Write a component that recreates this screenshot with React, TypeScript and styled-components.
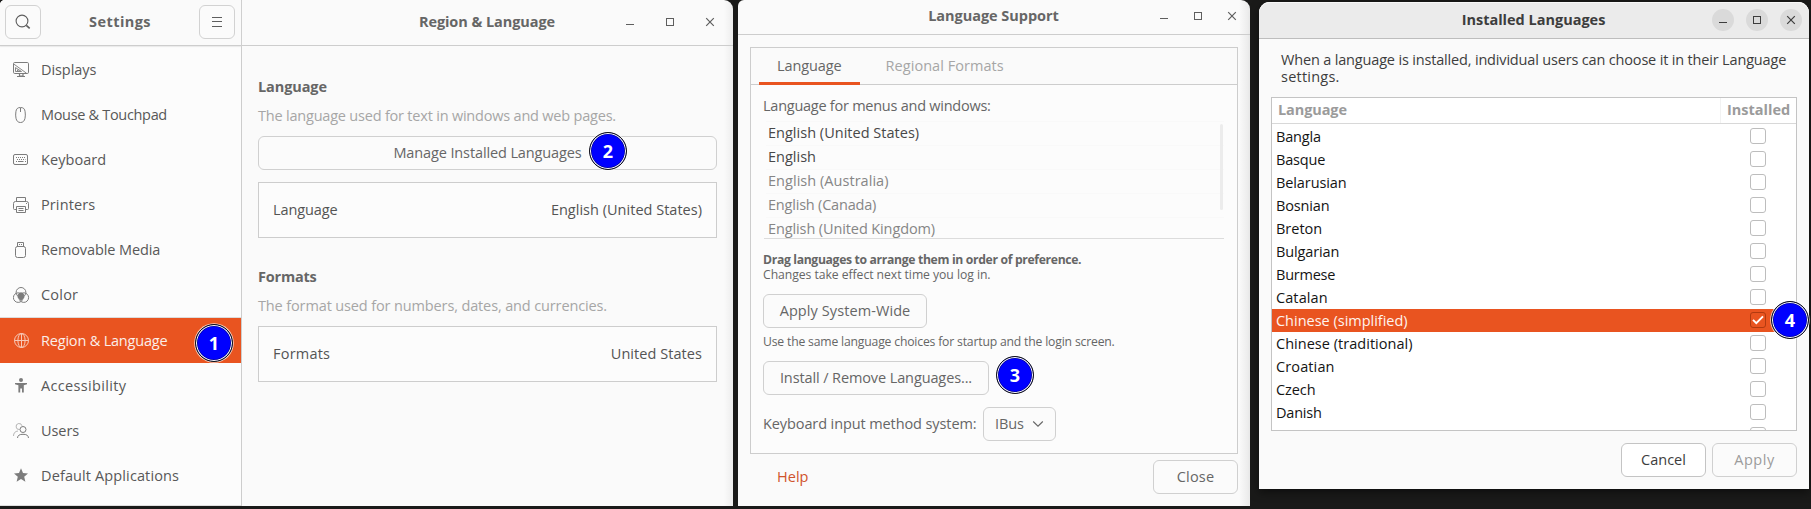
import React from 'react';
import styled, { createGlobalStyle, css } from 'styled-components';

const GlobalStyle = createGlobalStyle`
  * { box-sizing: border-box; }
  html, body { margin: 0; padding: 0; background: #1a1a19; }
  body { overflow: hidden; }
  button { font: inherit; padding: 0; }
`;

const accent = '#e95420';
const line = '#cdcdcd';

const Desktop = styled.main`
  display: flex;
  align-items: flex-start;
  width: 1811px;
  height: 509px;
  overflow: hidden;
  font-family: 'Open Sans', 'Noto Sans', sans-serif;
  font-size: 14.5px;
  line-height: 20px;
  color: #666;
  background: #1a1a19;
  white-space: nowrap;
`;

const Label = styled.span<{ $ls?: number }>`
  letter-spacing: ${p => p.$ls ?? 0}px;
`;

const Title = styled(Label)`
  font-weight: 700;
`;

/* ---------- shared window chrome ---------- */

const WinControls = styled.div<{ $gap: number }>`
  display: flex;
  align-items: center;
  gap: ${p => p.$gap}px;
`;

const ControlButton = styled.button<{ $round?: boolean }>`
  display: flex;
  align-items: center;
  justify-content: center;
  width: 22px;
  height: 22px;
  border: 0;
  border-radius: 50%;
  color: ${p => (p.$round ? '#3d3d3d' : '#5e5e5e')};
  background: ${p => (p.$round ? '#dadada' : 'transparent')};
`;

const PushButton = styled.button<{ $w?: number; $disabled?: boolean; $strong?: boolean }>`
  display: flex;
  align-items: center;
  justify-content: center;
  width: ${p => (p.$w ? `${p.$w}px` : '100%')};
  height: 34px;
  flex: none;
  border: 1px solid ${p => (p.$strong ? '#c4c4c4' : '#d0d0d0')};
  border-radius: 6px;
  background: ${p => (p.$strong ? '#fff' : '#fbfbfb')};
  color: ${p => (p.$disabled ? '#9c9c9c' : p.$strong ? '#3d3d3d' : '#666')};
`;

const Glyph = styled.svg`
  display: block;
  flex: none;
`;

function Controls({ gap, round }: { gap: number; round?: boolean }) {
  return (
    <WinControls $gap={gap}>
      <ControlButton $round={round} aria-label="Minimize">
        <Glyph width="10" height="10" viewBox="0 0 10 10"><path d="M1 7.5h8" stroke="currentColor" /></Glyph>
      </ControlButton>
      <ControlButton $round={round} aria-label="Maximize">
        <Glyph width="10" height="10" viewBox="0 0 10 10"><rect x="1.5" y="1.5" width="7" height="7" fill="none" stroke="currentColor" /></Glyph>
      </ControlButton>
      <ControlButton $round={round} aria-label="Close">
        <Glyph width="10" height="10" viewBox="0 0 10 10"><path d="M1.2 1.2l7.6 7.6M8.8 1.2L1.2 8.8" stroke="currentColor" strokeWidth="1.2" /></Glyph>
      </ControlButton>
    </WinControls>
  );
}

const Badge = styled.span<{ $x: number; $y: number }>`
  position: absolute;
  left: ${p => p.$x - 19}px;
  top: ${p => p.$y - 19}px;
  display: flex;
  align-items: center;
  justify-content: center;
  width: 38px;
  height: 38px;
  border: 1px solid #111;
  border-radius: 50%;
  background: #00f;
  box-shadow: 0 0 0 0.8px rgba(255, 255, 255, 0.75), inset 0 0 0 1px #fff, inset 0 0 0 1.6px #000090;
  color: #fff;
  font-size: 18px;
  font-weight: 700;
  z-index: 2;
`;

/* ---------- Settings ---------- */

const SettingsWindow = styled.section`
  position: relative;
  display: flex;
  width: 733px;
  height: 506px;
  flex: none;
  border-radius: 5px 9px 0 0;
  background: linear-gradient(to left, #ededed, #fafafa 9px);
`;

const Sidebar = styled.nav`
  display: flex;
  flex-direction: column;
  width: 242px;
  border-right: 1px solid ${line};
  border-radius: 5px 0 0 0;
  background: #fcfcfc;
`;

const SidebarHeader = styled.header`
  display: flex;
  align-items: center;
  justify-content: space-between;
  height: 46px;
  padding: 0 6px 1px 5px;
  border-bottom: 1px solid ${line};
  border-radius: 5px 0 0 0;
  background: #fafafa;
  box-shadow: 0 1px 1px #e9e9e9;
`;

const IconButton = styled.button`
  display: flex;
  align-items: center;
  justify-content: center;
  width: 36px;
  height: 34px;
  border: 1px solid #d2d2d2;
  border-radius: 6px;
  background: #fbfbfb;
  color: #5e5e5e;
`;

const NavList = styled.div`
  display: flex;
  flex-direction: column;
  flex: 1;
  padding-top: 1px;
  border-bottom: 1px solid #dedede;
`;

const NavItem = styled.a<{ $active?: boolean }>`
  display: flex;
  align-items: center;
  gap: 11px;
  height: 45px;
  flex: none;
  padding-left: 13px;
  color: #585858;
  svg { color: #7c7c7c; }
  ${p => p.$active && css`
    box-sizing: content-box;
    border-top: 1px solid #dcdcdc;
    background: ${accent};
    background-clip: padding-box;
    color: #fbeee9;
    svg { color: #f7c9b8; }
  `}
`;

const SettingsMain = styled.div`
  display: flex;
  flex-direction: column;
  flex: 1;
`;

const SettingsHeader = styled.header`
  display: grid;
  grid-template-columns: 1fr auto 1fr;
  align-items: center;
  height: 46px;
  padding: 0 12px 1px 11px;
  border-bottom: 1px solid ${line};
  > :last-child { justify-self: end; }
`;

const SettingsTitle = styled(Title)`
  grid-column: 2;
`;

const Panel = styled.div`
  display: flex;
  flex-direction: column;
  padding: 31px 16px 0;
`;

const Heading = styled.h2<{ $ls: number; $top?: number }>`
  margin: ${p => p.$top ?? 0}px 0 0;
  font-size: inherit;
  font-weight: 700;
  letter-spacing: ${p => p.$ls}px;
`;

const Description = styled.p<{ $ls: number }>`
  margin: 9px 0 10px;
  color: #a6a6a6;
  letter-spacing: ${p => p.$ls}px;
`;

const Card = styled.div<{ $top?: number }>`
  display: flex;
  align-items: center;
  justify-content: space-between;
  height: 56px;
  margin-top: ${p => p.$top ?? 0}px;
  padding: 0 14px;
  border: 1px solid ${line};
  background: #fcfcfc;
  color: #545454;
`;

const stroke = { fill: 'none', stroke: 'currentColor' } as const;

const icons: Record<string, React.ReactNode> = {
  displays: (
    <g {...stroke}>
      <rect x=".5" y=".5" width="15" height="11" rx="1.2" />
      <path d="M1 2.2l12.5 9M2.5 5.6v3.9h6zM4.5 7.7v1.3h2" strokeWidth=".9" />
      <path d="M6.500 12v2h3.500v-2M4 14.500h8" strokeWidth="1.200" />
    </g>
  ),
  mouse: (
    <g {...stroke}>
      <path d="M7.500.5c3 0 4.300 1.400 4.600 4.200.3 2.300.4 4.600-.1 6.600-.6 2.700-2 4.200-4.500 4.200S3.600 14 3 11.300c-.5-2-.4-4.300-.1-6.600C3.200 1.900 4.500.5 7.500.5z" />
      <path d="M7.500 1v4" />
    </g>
  ),
  keyboard: (
    <g {...stroke}>
      <rect x=".5" y="2.500" width="14" height="10" rx="1.500" />
      <path d="M3 5.500h10M4 7.500h8.500" strokeDasharray="1 1" />
      <path d="M3 9.500h1M5 9.500h5.500M12 9.500h1" />
    </g>
  ),
  printers: (
    <g {...stroke}>
      <path d="M3.500 4V.5h9V4M3.500 12.500h-2a1 1 0 0 1-1-1V6.500a2 2 0 0 1 2-2h11a2 2 0 0 1 2 2v5a1 1 0 0 1-1 1h-2" />
      <path d="M3.500 9.500h9v6h-9zM5.500 11.500h5M5.500 13.500h5M13 6.500h1" />
    </g>
  ),
  media: (
    <g {...stroke}>
      <path d="M4.500 5V.5h6V5M6 2.500h1M8 2.500h1" />
      <rect x="2.500" y="4.500" width="10" height="11" rx="2" />
    </g>
  ),
  color: (
    <g {...stroke}>
      <path d="M8 5.700l2.700 1.500.3 3.300-3 2.500-3-2.500.3-3.300z" fill="currentColor" />
      <circle cx="8" cy="5.400" r="4.900" />
      <circle cx="5.200" cy="10.600" r="4.800" />
      <circle cx="10.800" cy="10.600" r="4.800" />
    </g>
  ),
  region: (
    <g {...stroke}>
      <circle cx="8.500" cy="7.500" r="7" />
      <ellipse cx="8.500" cy="7.500" rx="3.600" ry="7" />
      <path d="M8.500.5v14M1.500 7.500h14" />
    </g>
  ),
  accessibility: (
    <g fill="currentColor">
      <circle cx="8" cy="2" r="2" />
      <path d="M2 5h12v1.300l-3.200.9V14.500H9v-4H7.200v4H5.400V7.200L2 6.300z" />
    </g>
  ),
  users: (
    <g {...stroke}>
      <g opacity=".55">
        <path d="M6.500 6.500A3 3 0 1 1 9 2.800M.5 13c0-2.800 1.600-4.800 4.500-5" />
      </g>
      <circle cx="10" cy="6.500" r="3" />
      <path d="M4.500 15c.3-2.800 2-3.700 5.500-3.700s5.200.9 5.500 3.700" />
    </g>
  ),
  star: <path fill="currentColor" d="M8 .3l2 4.700 5 .4-3.800 3.400 1.200 5L8 11.100l-4.400 2.700 1.200-5L1 5.400l5-.4z" />,
};

const nav: { icon: string; text: string; ls: number }[] = [
  { icon: 'displays', text: 'Displays', ls: -0.08 },
  { icon: 'mouse', text: 'Mouse & Touchpad', ls: -0.32 },
  { icon: 'keyboard', text: 'Keyboard', ls: 0.06 },
  { icon: 'printers', text: 'Printers', ls: 0.11 },
  { icon: 'media', text: 'Removable Media', ls: -0.1 },
  { icon: 'color', text: 'Color', ls: 0.21 },
  { icon: 'region', text: 'Region & Language', ls: -0.19 },
  { icon: 'accessibility', text: 'Accessibility', ls: 0.33 },
  { icon: 'users', text: 'Users', ls: -0.06 },
  { icon: 'star', text: 'Default Applications', ls: 0.12 },
];

function Settings() {
  return (
    <SettingsWindow>
      <Sidebar>
        <SidebarHeader>
          <IconButton aria-label="Search">
            <Glyph width="16" height="16" viewBox="0 0 16 16">
              <circle cx="7" cy="7" r="5.900" fill="none" stroke="currentColor" strokeWidth="1.100" />
              <path d="M11.300 11.300l3.400 3" stroke="currentColor" strokeWidth="1.600" />
            </Glyph>
          </IconButton>
          <Title $ls={0.42}>Settings</Title>
          <IconButton aria-label="Menu">
            <Glyph width="10" height="10" viewBox="0 0 10 10"><path d="M0 .5h10M0 4.500h10M0 9.500h10" stroke="currentColor" /></Glyph>
          </IconButton>
        </SidebarHeader>
        <NavList>
          {nav.map(n => (
            <NavItem key={n.text} $active={n.icon === 'region'}>
              <Glyph width="17" height="16" viewBox="0 0 17 16">{icons[n.icon]}</Glyph>
              <Label $ls={n.ls}>{n.text}</Label>
            </NavItem>
          ))}
        </NavList>
      </Sidebar>
      <SettingsMain>
        <SettingsHeader>
          <SettingsTitle $ls={-0.07}>Region &amp; Language</SettingsTitle>
          <Controls gap={18} />
        </SettingsHeader>
        <Panel>
          <Heading $ls={-0.1}>Language</Heading>
          <Description $ls={-0.205}>The language used for text in windows and web pages.</Description>
          <PushButton><Label $ls={-0.12}>Manage Installed Languages</Label></PushButton>
          <Card $top={12}>
            <Label $ls={-0.1}>Language</Label>
            <Label $ls={0.016}>English (United States)</Label>
          </Card>
          <Heading $ls={-0.215} $top={29}>Formats</Heading>
          <Description $ls={-0.13}>The format used for numbers, dates, and currencies.</Description>
          <Card>
            <Label $ls={0.21}>Formats</Label>
            <Label $ls={0.06}>United States</Label>
          </Card>
        </Panel>
      </SettingsMain>
      <Badge $x={214} $y={343}>1</Badge>
      <Badge $x={608} $y={151}>2</Badge>
    </SettingsWindow>
  );
}

/* ---------- Language Support ---------- */

const SupportWindow = styled.section`
  position: relative;
  display: flex;
  flex-direction: column;
  width: 512px;
  height: 506px;
  flex: none;
  margin-left: 5px;
  border-radius: 6px 9px 0 0;
  background: linear-gradient(to left, #e9e9e9, #fafafa 11px);
`;

const SupportHeader = styled.header`
  display: grid;
  grid-template-columns: 1fr auto 1fr;
  align-items: center;
  height: 35px;
  padding: 0 7px 3px 6px;
  border-bottom: 1px solid ${line};
  > :last-child { justify-self: end; }
`;

const Notebook = styled.div`
  display: flex;
  flex-direction: column;
  height: 407px;
  margin: 12px 12px 0;
  border: 1px solid ${line};
  background: #fcfcfc;
`;

const Tabs = styled.div`
  display: flex;
  gap: 8px;
  height: 37px;
  padding-left: 8px;
  border-bottom: 1px solid ${line};
  background: #fafafa;
`;

const Tab = styled.div<{ $active?: boolean }>`
  display: flex;
  align-items: center;
  height: 37px;
  padding: 2px 18px 0;
  border-bottom: 3px solid ${p => (p.$active ? accent : 'transparent')};
  color: ${p => (p.$active ? '#666' : '#a6a6a6')};
`;

const TabBody = styled.div`
  display: flex;
  flex-direction: column;
  align-items: flex-start;
  padding: 11px 13px 0 12px;
`;

const LanguageList = styled.ul`
  display: flex;
  flex-direction: column;
  align-self: stretch;
  position: relative;
  height: 118px;
  margin: 5px 0 13px 1px;
  padding: 0 0 0 2px;
  overflow: hidden;
  list-style: none;
  border-bottom: 1px solid #dcdcdc;
`;

const LanguageItem = styled.li<{ $dim?: boolean; $ls: number }>`
  height: 24px;
  flex: none;
  padding-left: 2px;
  border-top: 1px solid #f9f9f9;
  line-height: 21px;
  color: ${p => (p.$dim ? '#868686' : '#484848')};
  letter-spacing: ${p => p.$ls}px;
`;

const ScrollThumb = styled.span`
  position: absolute;
  top: 3px;
  right: 1px;
  width: 3px;
  height: 86px;
  border-radius: 2px;
  background: #ececec;
`;

const Hint = styled.p<{ $ls: number; $bold?: boolean }>`
  margin: 0;
  font-size: 12.2px;
  line-height: 15px;
  font-weight: ${p => (p.$bold ? 700 : 400)};
  letter-spacing: ${p => p.$ls}px;
`;

const ButtonSlot = styled.div<{ $m: string }>`
  margin: ${p => p.$m};
`;

const InputRow = styled.div`
  display: flex;
  align-items: center;
  gap: 6px;
  height: 34px;
`;

const InputLabel = styled(Label)`
  width: 214px;
`;

const Select = styled(PushButton)`
  justify-content: space-between;
  padding: 0 11px 0 11px;
`;

const SupportFooter = styled.footer`
  display: flex;
  align-items: center;
  justify-content: space-between;
  margin: 6px 12px 0;
  padding-left: 27px;
`;

const HelpLink = styled.a`
  color: #d0532c;
`;

const menuLanguages = [
  { text: 'English (United States)', ls: 0.016 },
  { text: 'English', ls: 0.01 },
  { text: 'English (Australia)', ls: 0.04, dim: true },
  { text: 'English (Canada)', ls: -0.2, dim: true },
  { text: 'English (United Kingdom)', ls: -0.11, dim: true },
];

function LanguageSupport() {
  return (
    <SupportWindow>
      <SupportHeader>
        <span />
        <Title $ls={-0.03}>Language Support</Title>
        <Controls gap={12} />
      </SupportHeader>
      <Notebook>
        <Tabs>
          <Tab $active><Label $ls={-0.1}>Language</Label></Tab>
          <Tab><Label $ls={0.05}>Regional Formats</Label></Tab>
        </Tabs>
        <TabBody>
          <Label $ls={-0.25}>Language for menus and windows:</Label>
          <LanguageList>
            {menuLanguages.map(l => (
              <LanguageItem key={l.text} $ls={l.ls} $dim={l.dim}>{l.text}</LanguageItem>
            ))}
            <ScrollThumb />
          </LanguageList>
          <Hint $bold $ls={-0.336}>Drag languages to arrange them in order of preference.</Hint>
          <Hint $ls={-0.05}>Changes take effect next time you log in.</Hint>
          <ButtonSlot $m="12px 0 6px">
            <PushButton $w={164}><Label $ls={0.09}>Apply System-Wide</Label></PushButton>
          </ButtonSlot>
          <Hint $ls={-0.18}>Use the same language choices for startup and the login screen.</Hint>
          <ButtonSlot $m="12px 0">
            <PushButton $w={226}><Label $ls={-0.11}>Install / Remove Languages...</Label></PushButton>
          </ButtonSlot>
          <InputRow>
            <InputLabel $ls={-0.1}>Keyboard input method system:</InputLabel>
            <Select $w={73}>
              <Label $ls={-0.11}>IBus</Label>
              <Glyph width="12" height="8" viewBox="0 0 12 8"><path d="M1.200 1.500L6 6.200l4.800-4.700" fill="none" stroke="currentColor" strokeWidth="1.100" /></Glyph>
            </Select>
          </InputRow>
        </TabBody>
      </Notebook>
      <SupportFooter>
        <HelpLink><Label $ls={0.03}>Help</Label></HelpLink>
        <PushButton $w={85}><Label $ls={0.22}>Close</Label></PushButton>
      </SupportFooter>
      <Badge $x={277} $y={375}>3</Badge>
    </SupportWindow>
  );
}

/* ---------- Installed Languages ---------- */

const InstalledWindow = styled.section`
  position: relative;
  display: flex;
  flex-direction: column;
  width: 550px;
  height: 487px;
  flex: none;
  margin: 2px 0 0 9px;
  border-radius: 11px 11px 0 0;
  background: #fafafa;
  color: #3d3d3d;
  box-shadow: 0 3px 10px rgba(0, 0, 0, 0.5);
`;

const InstalledHeader = styled.header`
  display: grid;
  grid-template-columns: 1fr auto 1fr;
  align-items: center;
  height: 37px;
  padding: 0 7px 0 6px;
  border-bottom: 1px solid #bdbdbd;
  border-radius: 11px 11px 0 0;
  background: #ebebeb;
  box-shadow: inset 0 1px #f8f8f8;
  > :last-child { justify-self: end; }
`;

const Intro = styled.p`
  margin: 12px 0 0 22px;
  line-height: 17px;
`;

const Table = styled.div`
  display: flex;
  flex-direction: column;
  height: 334px;
  margin: 12px 12px 0;
  overflow: hidden;
  border: 1px solid #c4c4c4;
  background: #fff;
`;

const TableHead = styled.div`
  display: flex;
  align-items: center;
  justify-content: space-between;
  height: 26px;
  flex: none;
  padding-bottom: 1px;
  border-bottom: 1px solid #d8d8d8;
  color: #9b9b9b;
`;

const HeadCell = styled.div<{ $last?: boolean }>`
  height: 25px;
  padding: 0 6px;
  line-height: 24px;
  ${p => p.$last && css`
    width: 76px;
    border-left: 1px solid #f2f2f2;
  `}
`;

const Rows = styled.div`
  display: flex;
  flex-direction: column;
  padding-top: 1px;
`;

const Row = styled.label<{ $selected?: boolean }>`
  display: flex;
  align-items: center;
  justify-content: space-between;
  height: 23px;
  flex: none;
  padding: 0 30px 0 4px;
  color: ${p => (p.$selected ? '#fff3ee' : '#141414')};
  background: ${p => (p.$selected ? accent : 'transparent')};
`;

const CheckBox = styled.span<{ $checked?: boolean }>`
  display: flex;
  align-items: center;
  justify-content: center;
  width: 16px;
  height: 16px;
  margin-bottom: 1px;
  border: 1px solid ${p => (p.$checked ? '#b03a10' : '#bdbdbd')};
  border-radius: 3px;
  background: ${p => (p.$checked ? accent : '#fff')};
  color: #fff;
`;

const Actions = styled.footer`
  display: flex;
  justify-content: flex-end;
  gap: 6px;
  margin: 12px 12px 0;
`;

const languages: [string, number][] = [
  ['Bangla', -0.17], ['Basque', -0.17], ['Belarusian', -0.1], ['Bosnian', -0.14], ['Breton', 0],
  ['Bulgarian', -0.13], ['Burmese', -0.23], ['Catalan', 0.09], ['Chinese (simplified)', -0.01],
  ['Chinese (traditional)', 0.03], ['Croatian', 0.12], ['Czech', -0.085], ['Danish', -0.22], ['Dutch', -0.1],
];

function InstalledLanguages() {
  return (
    <InstalledWindow>
      <InstalledHeader>
        <span />
        <Title $ls={-0.01}>Installed Languages</Title>
        <Controls gap={12} round />
      </InstalledHeader>
      <Intro>
        <Label $ls={-0.17}>When a language is installed, individual users can choose it in their Language</Label>
        <br />
        <Label $ls={0.23}>settings.</Label>
      </Intro>
      <Table>
        <TableHead>
          <HeadCell><Title $ls={-0.1}>Language</Title></HeadCell>
          <HeadCell $last><Title>Installed</Title></HeadCell>
        </TableHead>
        <Rows>
          {languages.map(([name, ls]) => {
            const on = name === 'Chinese (simplified)';
            return (
              <Row key={name} $selected={on}>
                <Label $ls={ls}>{name}</Label>
                <CheckBox $checked={on}>
                  {on && <Glyph width="12" height="10" viewBox="0 0 12 10"><path d="M1 4.800l3.300 3.300L11 1.300" fill="none" stroke="currentColor" strokeWidth="1.900" /></Glyph>}
                </CheckBox>
              </Row>
            );
          })}
        </Rows>
      </Table>
      <Actions>
        <PushButton $w={85} $strong><Label $ls={0.01}>Cancel</Label></PushButton>
        <PushButton $w={85} $disabled><Label $ls={0.53}>Apply</Label></PushButton>
      </Actions>
      <Badge $x={531} $y={318}>4</Badge>
    </InstalledWindow>
  );
}

export default function App() {
  return (
    <>
      <GlobalStyle />
      <Desktop>
        <Settings />
        <LanguageSupport />
        <InstalledLanguages />
      </Desktop>
    </>
  );
}
